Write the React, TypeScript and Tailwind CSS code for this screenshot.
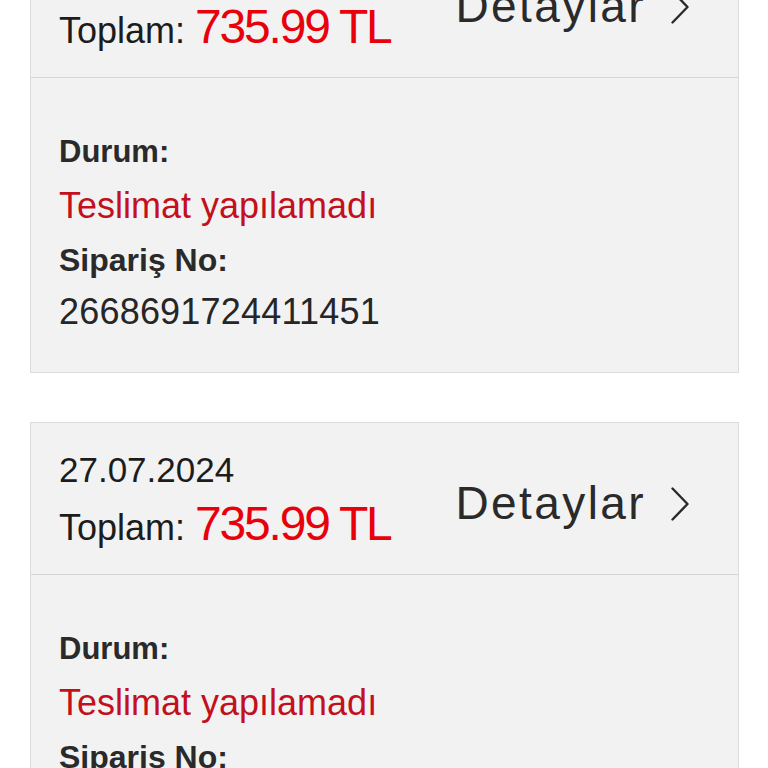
import React from "react";

type Order = {
  date: string;
  total: string;
  status: string;
  orderNo: string;
};

const orders: Order[] = [
  { date: "27.07.2024", total: "735.99 TL", status: "Teslimat yapılamadı", orderNo: "2668691724411451" },
  { date: "27.07.2024", total: "735.99 TL", status: "Teslimat yapılamadı", orderNo: "2668691724411451" },
];

function Chevron() {
  return (
    <svg width="20" height="36" viewBox="0 0 20 36" fill="none" className="shrink-0">
      <path d="M2.5 2.5 L17.5 18 L2.5 33.5" stroke="#2a2a2a" strokeWidth="2.4" strokeLinecap="round" strokeLinejoin="round" />
    </svg>
  );
}

function OrderCard({ order, first }: { order: Order; first?: boolean }) {
  return (
    <div
      className={`border border-[#dcdcdc] bg-[#f2f2f2] ${first ? "-mt-[75px]" : "mt-[49px]"}`}
    >
      {/* header */}
      <div className="flex items-center justify-between border-b border-[#d6d6d6] pl-[28px] pr-[48px] pt-[18px] pb-[14px]">
        <div>
          <div className="text-[35px] leading-[58px] text-[#1c1c1c]">{order.date}</div>
          <div className="leading-[50px]">
            <span className="text-[36px] text-[#1c1c1c]">Toplam: </span>
            <span className="text-[48px] tracking-[-2.2px] text-[#e8000b]">{order.total}</span>
          </div>
        </div>
        <div className="flex translate-y-[3px] items-center gap-[24px]">
          <span className="text-[46px] tracking-[2.4px] text-[#2a2a2a]">Detaylar</span>
          <Chevron />
        </div>
      </div>

      {/* body */}
      <div className="pl-[28px] pt-[47px] pb-[35px]">
        <div className="text-[31px] font-bold leading-[54px] text-[#2a2a2a]">Durum:</div>
        <div className="text-[36px] leading-[54px] text-[#c3101c]">{order.status}</div>
        <div className="text-[32px] font-bold leading-[54px] text-[#2a2a2a]">Sipariş No:</div>
        <div className="text-[36px] tracking-[0.2px] leading-[50px] text-[#262626]">{order.orderNo}</div>
      </div>
    </div>
  );
}

export default function App() {
  return (
    <div
      className="h-[768px] overflow-hidden bg-white pl-[30px] pr-[29px]"
      style={{ fontFamily: '"Liberation Sans", Arial, sans-serif' }}
    >
      {orders.map((o, i) => (
        <OrderCard key={i} order={o} first={i === 0} />
      ))}
    </div>
  );
}
